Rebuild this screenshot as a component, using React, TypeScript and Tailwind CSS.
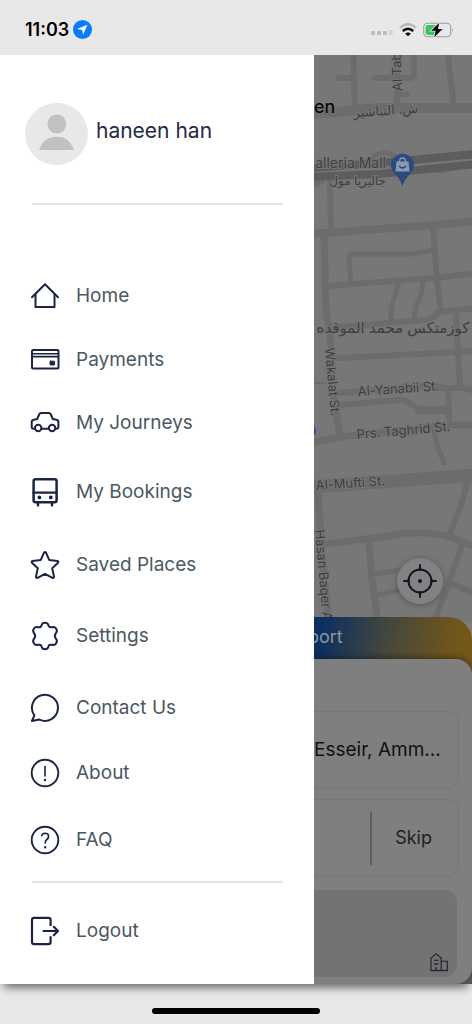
import type { ReactNode } from "react";

function MenuIcon({ children }: { children: ReactNode }) {
  return (
    <svg
      viewBox="0 0 30 30"
      className="size-[30px] shrink-0"
      fill="none"
      stroke="#1b2447"
      strokeWidth="2"
      strokeLinecap="round"
      strokeLinejoin="round"
      aria-hidden="true"
    >
      {children}
    </svg>
  );
}

const items: { label: string; row: string; icon: ReactNode }[] = [
  {
    label: "Home",
    row: "h-16",
    icon: (
      <>
        <path d="M2 16.2 L15 3.2 L28 16.2" />
        <path d="M5.5 13.5 V26 H24.5 V13.5" />
      </>
    ),
  },
  {
    label: "Payments",
    row: "h-16",
    icon: (
      <>
        <rect x="2" y="5" width="26.5" height="18.5" rx="1" strokeWidth="2" />
        <path d="M2 8.8 H28 M2 11.6 H28" strokeWidth="1.6" />
        <rect x="20" y="16.2" width="4.6" height="3.8" rx="0.6" fill="#1b2447" strokeWidth="1" />
      </>
    ),
  },
  {
    label: "My Journeys",
    row: "h-[62px]",
    icon: (
      <>
        <path d="M5 20.7 H3.6 Q1.7 20.7 1.7 18.8 V14.2 Q1.7 12.2 3.8 11.8 L7.2 11 L9.4 6 Q9.9 5 11 5 H19 Q20.1 5 20.6 6 L22.8 11 L26.4 11.8 Q28.4 12.2 28.4 14.2 V18.8 Q28.4 20.7 26.5 20.7 H25.5 M11.5 20.7 H18.7" strokeWidth="2" />
        <circle cx="8.2" cy="20" r="3.2" strokeWidth="2" />
        <circle cx="22.1" cy="20" r="3.2" strokeWidth="2" />
      </>
    ),
  },
  {
    label: "My Bookings",
    row: "h-[76px]",
    icon: (
      <>
        <rect x="3.6" y="2.3" width="23" height="23" rx="2" strokeWidth="2.5" />
        <path d="M3.6 15.6 H26.6 M8 26 V28.4 M22 26 V28.4" strokeWidth="2.4" />
        <circle cx="9.4" cy="20.4" r="1.1" fill="#1b2447" strokeWidth="1.6" />
        <circle cx="20.8" cy="20.4" r="1.1" fill="#1b2447" strokeWidth="1.6" />
      </>
    ),
  },
  {
    label: "Saved Places",
    row: "h-[70px]",
    icon: (
      <path d="M14 2.6 Q15 1.2 16 2.6 L19.2 9.9 L27.4 10.9 Q29 11.4 28 12.7 L22.2 18.2 L24 26.6 Q24 28.4 22.4 27.8 L15 23.9 L7.6 27.8 Q6 28.4 6 26.6 L7.8 18.2 L2 12.7 Q1 11.4 2.6 10.9 L10.8 9.9 Z" />
    ),
  },
  {
    label: "Settings",
    row: "h-[72px]",
    icon: (
      <path d="M11.7 4 Q12.3 1.8 15 1.8 Q17.7 1.8 18.3 4 Q19 6.8 21.9 6.2 Q24.8 5.4 26.2 7.7 Q27.7 10.2 25.9 12.1 Q23.7 15 25.9 17.7 Q27.7 19.8 26.2 22.2 Q24.8 24.6 21.9 23.8 Q19 23 18.3 26 Q17.7 28.2 15 28.2 Q12.3 28.2 11.7 26 Q11 23 8.1 23.8 Q5.2 24.6 3.8 22.2 Q2.3 19.8 4.1 17.7 Q6.3 15 4.1 12.1 Q2.3 10.2 3.8 7.7 Q5.2 5.4 8.1 6.2 Q11 6.8 11.7 4 Z" />
    ),
  },
  {
    label: "Contact Us",
    row: "h-[72px]",
    icon: <path d="M4.4 22.4 A13 13 0 1 1 9.5 26.6 L1.9 28 Z" strokeWidth="2" />,
  },
  {
    label: "About",
    row: "h-[58px]",
    icon: (
      <>
        <circle cx="15" cy="15" r="13.3" strokeWidth="1.9" />
        <path d="M15 8.6 V18" strokeWidth="1.6" />
        <circle cx="15" cy="22" r="0.6" strokeWidth="1.2" />
      </>
    ),
  },
  {
    label: "FAQ",
    row: "h-[76px]",
    icon: (
      <>
        <circle cx="15" cy="15" r="13.3" strokeWidth="1.9" />
        <path d="M11.8 10.600 Q12.200 8.300 15.200 8.300 Q18.600 8.400 18.600 11.400 Q18.500 13.200 16.800 14.500 Q15.200 15.700 15.200 18" strokeWidth="1.6" />
        <circle cx="15.2" cy="22.2" r="0.6" strokeWidth="1.2" />
      </>
    ),
  },
];

function StatusBar() {
  return (
    <header className="flex h-[55px] items-center justify-between bg-[#e8e8e8] pt-1 pr-[18px] pl-[25px]">
      <div className="flex items-center gap-1">
        <span className="text-lg font-semibold text-black">11:03</span>
        <svg viewBox="0 0 20 20" className="size-[19px]" aria-hidden="true">
          <circle cx="10" cy="10" r="10" fill="#0a7aff" />
          <path d="M15.2 4.900 L4.300 9.600 L9.700 10.400 L10.600 15.800 Z" fill="#fff" />
        </svg>
      </div>
      <div className="flex items-center gap-[6px]">
        <svg viewBox="0 0 22 12" className="mt-1 h-3 w-[22px]" aria-hidden="true">
          <rect x="0" y="5" width="4" height="4" rx="1" fill="#bdbdbd" />
          <rect x="6" y="5" width="4" height="4" rx="1" fill="#bdbdbd" />
          <rect x="12" y="5" width="4" height="4" rx="1" fill="#bdbdbd" />
          <rect x="18" y="4" width="3.6" height="5" rx="1" fill="#d3d3d3" />
        </svg>
        <svg viewBox="0 0 18 14" className="h-[14px] w-[18px]" fill="none" aria-hidden="true">
          <path d="M1 4.800 Q9 -2.200 17 4.800" stroke="#bababa" strokeWidth="2.4" />
          <path d="M3.800 8 Q9 3.400 14.200 8" stroke="#000" strokeWidth="2.4" />
          <path d="M9 13.200 L6.200 10.600 Q9 8.500 11.800 10.600 Z" fill="#000" />
        </svg>
        <svg viewBox="0 0 31 16" className="h-4 w-[31px]" aria-hidden="true">
          <rect x="0.7" y="1.2" width="27" height="13.6" rx="4" fill="none" stroke="#9b9b9b" strokeWidth="1.1" />
          <path d="M29.200 6 Q31 8 29.200 10 Z" fill="#9b9b9b" />
          <path d="M5 3 H13 V13 H5 Q2.600 13 2.600 10.600 V5.400 Q2.600 3 5 3 Z" fill="#34c759" />
          <path d="M16.300 0.800 L8.200 8.800 H12.600 L11.200 15.200 L19.600 6.900 H14.800 Z" fill="#000" stroke="#e8e8e8" strokeWidth="1.6" paintOrder="stroke" />
        </svg>
      </div>
    </header>
  );
}

function Drawer() {
  return (
    <aside className="flex w-2/3 max-w-[314px] shrink-0 flex-col bg-white">
      <div className="flex items-center gap-2 pt-12 pl-[25px]">
        <svg viewBox="0 0 63 62" className="h-[62px] w-[63px]" role="img" aria-label="Profile">
          <ellipse cx="31.5" cy="31" rx="31.5" ry="31" fill="#e8e8e8" />
          <circle cx="31.8" cy="21" r="9.4" fill="#c1c1c1" />
          <path d="M14 47 Q18.600 33.700 31.500 33.700 Q44.400 33.700 49 47 Z" fill="#c1c1c1" />
        </svg>
        <h1 className="pb-1.5 text-[21px] leading-7 text-[#222b4b]">haneen han</h1>
      </div>
      <hr className="mt-[38px] mr-[31px] ml-8 border-t-2 border-[#e3e3e3]" />
      <nav className="mt-[59px]">
        <ul>
          {items.map((item) => (
            <li key={item.label}>
              <a href="#" className={`flex items-center gap-4 pl-[30px] text-[19px] text-[#4a5861] ${item.row}`}>
                <MenuIcon>{item.icon}</MenuIcon>
                <span>{item.label}</span>
              </a>
            </li>
          ))}
        </ul>
        <hr className="mt-[3px] mr-[31px] ml-8 border-t-2 border-[#e3e3e3]" />
        <button type="button" className="mt-3 flex h-[72px] w-full items-center gap-4 pl-[30px] text-[19px] text-[#4a5861]">
          <MenuIcon>
            <path d="M20.600 9.200 V4 Q20.600 1.900 18.500 1.900 H4.200 Q2 1.900 2 4 V26 Q2 28.100 4.200 28.100 H18.500 Q20.600 28.100 20.600 26 V21" strokeWidth="2.2" />
            <path d="M13.500 15 H28 M23.800 10.800 L28 15 L23.800 19.200" strokeWidth="2.2" />
          </MenuIcon>
          <span>Logout</span>
        </button>
      </nav>
    </aside>
  );
}

function StreetMap() {
  return (
    <svg
      viewBox="314 55 158 567"
      preserveAspectRatio="xMinYMin slice"
      className="block h-[567px] w-full bg-[#777777]"
      role="img"
      aria-label="Street map"
    >
      <g fill="none" stroke="#6c6c6c" strokeLinecap="round" strokeLinejoin="round" strokeWidth="6">
        <path d="M353 50 L355 108 M339 78 H352 M375 78 H409 Q414 78 414 72 V50 M397 50 V108 M398 94 H407 M447 50 L454 106" />
        <path d="M310 114 L380 108 H476" strokeWidth="10" />
        <path d="M372 158 Q384 147 398 158 M432 168 Q444 175 452 166 M314 184 Q324 183 324 176" strokeWidth="5" />
        <path d="M330 180 L331 232" />
        <path d="M310 234 L435 225 L476 221" strokeWidth="8" />
        <path d="M324 236 L326 310 L331 345 L334 400 L340 436" strokeWidth="7" />
        <path d="M433 226 L437 280 L441 312" />
        <path d="M328 286 L434 278 L476 273" />
        <path d="M351 282 L349 260 Q349 254 354 254 H412 L434 250" strokeWidth="5" />
        <path d="M399 282 L391 309 V322 M423 280 Q423 295 416 306 L414 320" strokeWidth="5" />
        <path d="M328 328 L424 320 Q433 319 438 312 L476 308" />
        <path d="M456 314 L460 388 M338 358 L476 351" />
        <path d="M310 383 H326" strokeWidth="2" />
        <path d="M338 393 L434 385 Q442 389 448 388 H462 L476 391 M340 405 L400 400 Q406 400 410 404 L418 409 H445 M448 388 L449 425 M418 411 H448" />
        <path d="M310 443 L340 437 L450 425 H476" strokeWidth="7" />
        <path d="M434 430 L436 442 L444 463" strokeWidth="5" />
        <path d="M310 487 L380 482 L476 475" strokeWidth="13" />
        <path d="M467 482 L461 506 L450 533 M462 545 L449 583 L434 622 M450 583 L476 594" />
        <path d="M318 490 L321 545 L329 622 M325 544 L390 536 Q418 529 450 537 L476 547 M369 541 L372 580 L378 622" strokeWidth="7" />
        <path d="M375 574 L400 570 M377 595 L400 590" strokeWidth="5" />
      </g>
      <g fill="none" stroke="#5d5d5d">
        <path d="M310 168 L380 163 L476 154" strokeWidth="8" />
        <path d="M310 177 L380 174 L476 164" strokeWidth="8" />
      </g>
      <path d="M402 186 Q401 180 395 174 A11.500 11.500 0 1 1 410 174 Q404 180 402.500 186 Z" fill="#2a4a80" />
      <path d="M396.500 161.500 H408.500 L409.500 171.500 H395.500 Z" fill="#8b98ad" />
      <path d="M399.500 162 Q399.500 158 402.500 158 Q405.500 158 405.500 162" fill="none" stroke="#8b98ad" strokeWidth="1.4" />
      <path d="M399 166 Q402.500 170 406 166" fill="none" stroke="#2a4a80" strokeWidth="1.4" />
      <circle cx="309" cy="431" r="7" fill="#2450a4" />
      <g fill="#3e3e3e" stroke="#767676" strokeWidth="2" paintOrder="stroke" fontSize="13">
        <text transform="translate(402 91) rotate(-92)">Al Tab</text>
        <text transform="translate(386 115) rotate(-4)" textAnchor="middle" direction="rtl">ش. التباشير</text>
        <text x="386" y="168" textAnchor="end" fontSize="14">alleria Mall</text>
        <text x="386" y="185" textAnchor="start" direction="rtl" fontSize="12">جاليريا مول</text>
        <text x="393" y="333" textAnchor="middle" direction="rtl" fontSize="15">كوزمتكس محمد الموقده</text>
        <text transform="translate(325 348) rotate(85)">Wakalat St.</text>
        <text transform="translate(358 396) rotate(-4)">Al-Yanabii St.</text>
        <text transform="translate(357 439) rotate(-5)">Prs. Taghrid St.</text>
        <text transform="translate(316 490) rotate(-4)">Al-Mufti St.</text>
        <text transform="translate(315 530) rotate(85)">Hasan Baqer A</text>
      </g>
    </svg>
  );
}

function RidePanel() {
  return (
    <section className="relative -mt-[5px] flex grow flex-col rounded-tr-[24px] bg-[#555555] bg-[linear-gradient(100deg,#0b2f60_5%,#45473c_45%,#735719_88%)] bg-[length:100%_70px] bg-no-repeat">
      <h2 className="-ml-1.5 h-[42px] pt-1.5 text-lg leading-7 text-[#8f959c]">port</h2>
      <div className="flex grow flex-col rounded-r-2xl bg-[#7f7f7f] pt-[52px] pb-[7px] shadow-[0_-2px_6px_rgba(0,0,0,0.35)]">
        <div className="mr-[13px] flex h-[78px] items-center rounded-r-xl border border-l-0 border-[#777777] text-[19px] whitespace-nowrap text-[#111111]">
          Esseir, Amm...
        </div>
        <div className="mt-[10px] mr-[13px] flex h-[78px] items-center justify-end rounded-r-xl border border-l-0 border-[#777777] pr-[26px]">
          <span className="mr-[23px] h-[53px] w-0.5 bg-[#5e5e5e]" />
          <button type="button" className="text-lg text-[#1e1e1e]">Skip</button>
        </div>
        <div className="mt-[13px] mr-[15px] flex grow items-end justify-end rounded-r-xl bg-[#737373] pr-2 pb-[5px]">
          <svg viewBox="0 0 20 20" className="size-5" fill="none" stroke="#272b3a" strokeWidth="1.3" role="img" aria-label="Buildings">
            <path d="M2 18.500 V6 L7.200 1.800 L12.200 6 V18.500 Z M12.200 9.300 H18.300 V18.500 H12.200" />
            <path d="M5 8.300 H9.500 M5 12 H9.500 M7.200 18 V15" />
          </svg>
        </div>
      </div>
    </section>
  );
}

export default function App() {
  return (
    <div className="flex min-h-screen flex-col bg-[#e8e8e8] font-['Inter','DejaVu_Sans',sans-serif]">
      <StatusBar />
      <div className="relative flex grow shadow-[0_7px_9px_-4px_rgba(0,0,0,0.6)]">
        <Drawer />
        <main className="flex min-w-0 grow flex-col overflow-hidden bg-[#7d7d7d]">
          <div className="relative">
            <StreetMap />
            <span className="absolute top-[38px] left-0 text-lg text-black">en</span>
            <button
              type="button"
              aria-label="Center on my location"
              className="absolute right-[29px] bottom-[18px] flex size-[46px] items-center justify-center rounded-full bg-[#828282] shadow-[0_1px_6px_rgba(0,0,0,0.3)]"
            >
              <svg viewBox="0 0 36 36" className="size-9" fill="none" stroke="#111427" strokeWidth="2" strokeLinecap="round" aria-hidden="true">
                <circle cx="18" cy="18" r="11.5" />
                <path d="M18 2 V7 M18 29 V34 M2 18 H7 M29 18 H34" />
                <circle cx="18" cy="18" r="1" fill="#111427" />
              </svg>
            </button>
          </div>
          <RidePanel />
        </main>
      </div>
      <footer className="flex h-10 items-end justify-center pb-[10px]">
        <div className="h-1.5 w-[168px] rounded-full bg-black" />
      </footer>
    </div>
  );
}
